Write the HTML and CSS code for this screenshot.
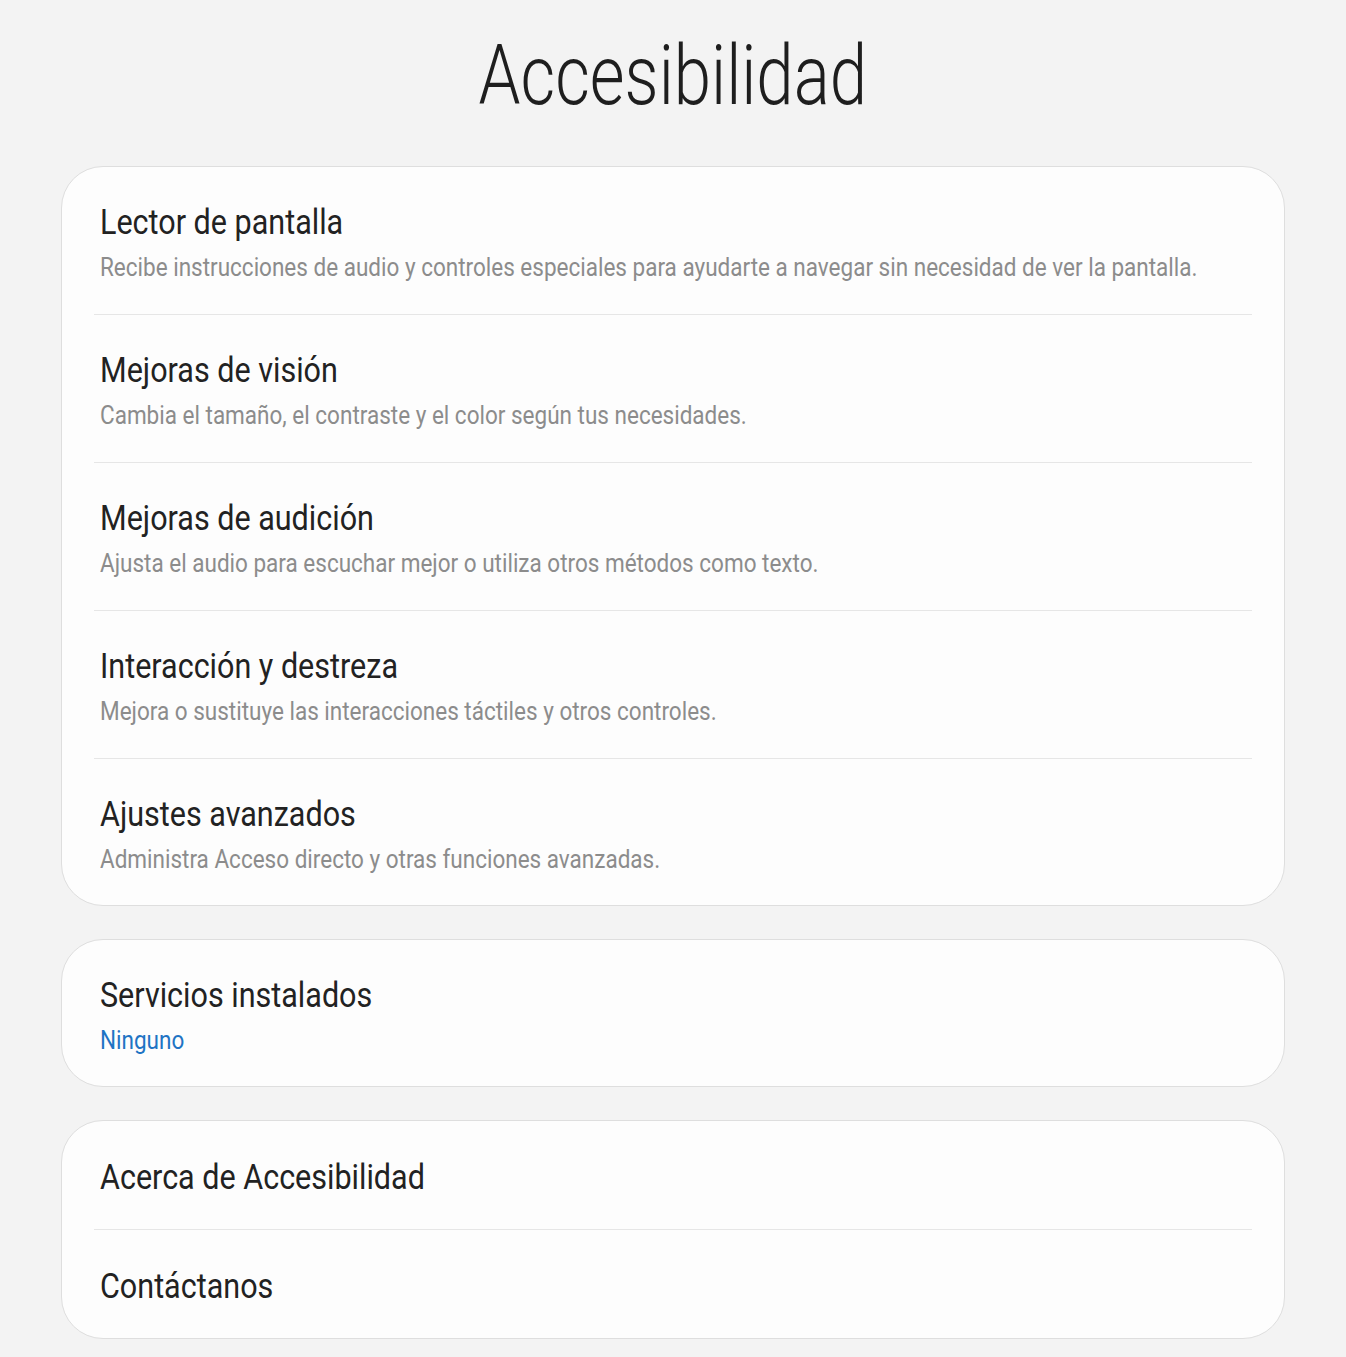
FILE: index.html
```html
<!DOCTYPE html>
<html lang="es">
<head>
<meta charset="utf-8">
<title>Accesibilidad</title>
<link rel="stylesheet" href="styles.css">
</head>
<body>
<main class="page">
  <h1 class="page-title"><span class="sq sq-center">Accesibilidad</span></h1>

  <section class="card">
    <div class="row">
      <div class="row-title"><span class="sq">Lector de pantalla</span></div>
      <div class="row-sub"><span class="sq">Recibe instrucciones de audio y controles especiales para ayudarte a navegar sin necesidad de ver la pantalla.</span></div>
    </div>
    <div class="row">
      <div class="row-title"><span class="sq">Mejoras de visión</span></div>
      <div class="row-sub"><span class="sq">Cambia el tamaño, el contraste y el color según tus necesidades.</span></div>
    </div>
    <div class="row">
      <div class="row-title"><span class="sq">Mejoras de audición</span></div>
      <div class="row-sub"><span class="sq">Ajusta el audio para escuchar mejor o utiliza otros métodos como texto.</span></div>
    </div>
    <div class="row">
      <div class="row-title"><span class="sq">Interacción y destreza</span></div>
      <div class="row-sub"><span class="sq">Mejora o sustituye las interacciones táctiles y otros controles.</span></div>
    </div>
    <div class="row">
      <div class="row-title"><span class="sq">Ajustes avanzados</span></div>
      <div class="row-sub"><span class="sq">Administra Acceso directo y otras funciones avanzadas.</span></div>
    </div>
  </section>

  <section class="card">
    <div class="row">
      <div class="row-title"><span class="sq">Servicios instalados</span></div>
      <div class="row-sub row-sub-blue"><span class="sq">Ninguno</span></div>
    </div>
  </section>

  <section class="card">
    <div class="row row-single">
      <div class="row-title"><span class="sq">Acerca de Accesibilidad</span></div>
    </div>
    <div class="row row-single">
      <div class="row-title"><span class="sq">Contáctanos</span></div>
    </div>
  </section>
</main>
</body>
</html>
```

FILE: styles.css
```css
* { box-sizing: border-box; }

html, body {
  margin: 0;
  padding: 0;
  background: #f3f3f3;
}

body {
  font-family: Roboto, "Noto Sans", "Liberation Sans", sans-serif;
  color: #222222;
}

.page {
  display: flex;
  flex-direction: column;
  padding: 26px 61px 20px 61px;
  gap: 33px;
}

.page-title {
  margin: 0 0 7px 0;
  font-size: 84px;
  font-weight: 300;
  line-height: 100px;
  text-align: center;
  color: #1e1e1e;
}

.sq {
  display: inline-block;
  white-space: nowrap;
  transform: scaleX(0.8);
  transform-origin: left center;
}

.sq-center {
  transform-origin: center center;
}

.row-title .sq {
  transform: scaleX(0.872);
}

.row-sub .sq {
  transform: scaleX(0.9);
}

.card {
  background: #fdfdfd;
  border: 1px solid #dedede;
  border-radius: 42px;
  display: flex;
  flex-direction: column;
  padding: 0 32px;
}

.row {
  padding: 34px 6px 30px 6px;
  border-bottom: 1px solid #e6e6e6;
  display: flex;
  flex-direction: column;
  gap: 7px;
}

.row:last-child {
  border-bottom: none;
  padding-bottom: 29px;
}

.row-single,
.row-single:last-child {
  padding-top: 35px;
  padding-bottom: 29px;
}

.row-title {
  font-size: 35px;
  line-height: 44px;
  color: #222222;
}

.row-sub {
  font-size: 25px;
  line-height: 32px;
  color: #8c8c8c;
}

.row-sub-blue {
  color: #1f74c4;
}
```
